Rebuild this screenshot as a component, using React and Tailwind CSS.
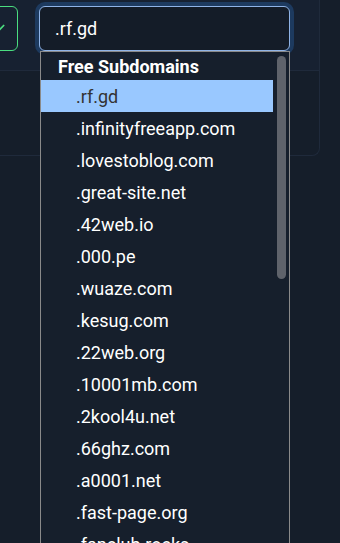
import React from "react";

const domains = [
  ".rf.gd",
  ".infinityfreeapp.com",
  ".lovestoblog.com",
  ".great-site.net",
  ".42web.io",
  ".000.pe",
  ".wuaze.com",
  ".kesug.com",
  ".22web.org",
  ".10001mb.com",
  ".2kool4u.net",
  ".66ghz.com",
  ".a0001.net",
  ".fast-page.org",
  ".fanclub.rocks",
  ".freehostia.net",
];

export default function App() {
  const selected = ".rf.gd";

  return (
    <div
      className="relative w-[340px] h-[543px] overflow-hidden bg-[#151e2a]"
      style={{ fontFamily: "Roboto, 'Noto Sans', sans-serif" }}
    >
      {/* Card behind the dropdown */}
      <div className="-ml-[20px] w-[340px] rounded-br-lg border-r border-b border-[#1f2a3b]">
        <div className="h-[71px] bg-[#172131] border-b border-[#1f2a3b] pt-[6px] flex gap-[21px]">
          {/* confirm button */}
          <div className="w-[38px] h-[45px] rounded-md border border-[#4ade80] flex items-center justify-center">
            <svg width="14" height="14" viewBox="0 0 24 24" fill="none" stroke="#4ade80" strokeWidth="3" strokeLinecap="round" strokeLinejoin="round">
              <path d="M4 12l5 5L20 6" />
            </svg>
          </div>
          {/* domain select */}
          <div className="w-[251px] h-[45px] rounded-md border border-[#8fb3e6] bg-[#141c28] ring-4 ring-[#1d3a5f] flex items-center pl-[15px] text-white text-[18px]">
            {selected}
          </div>
        </div>
        <div className="h-[84px]" />
      </div>

      {/* Native dropdown popup */}
      <div className="absolute left-[40px] top-[51px] w-[250px] h-[520px] border border-[#8a8a8a] bg-[#161f2c] flex">
        <div className="flex-1 flex flex-col">
          <div className="h-[28px] shrink-0 flex items-center pl-[17px] pt-[1px] text-white font-bold text-[18px]">
            Free Subdomains
          </div>
          {domains.map((d) => (
            <div
              key={d}
              className={
                d === selected
                  ? "h-[32px] shrink-0 flex items-center pl-[35px] text-[18px] bg-[#99c8ff] text-[#333333]"
                  : "h-[32px] shrink-0 flex items-center pl-[35px] text-[18px] text-white"
              }
            >
              {d}
            </div>
          ))}
        </div>
        <div className="w-[16px] pt-[4px] flex justify-center">
          <div className="w-[9px] h-[223px] rounded-full bg-[#5f636b]" />
        </div>
      </div>
    </div>
  );
}
